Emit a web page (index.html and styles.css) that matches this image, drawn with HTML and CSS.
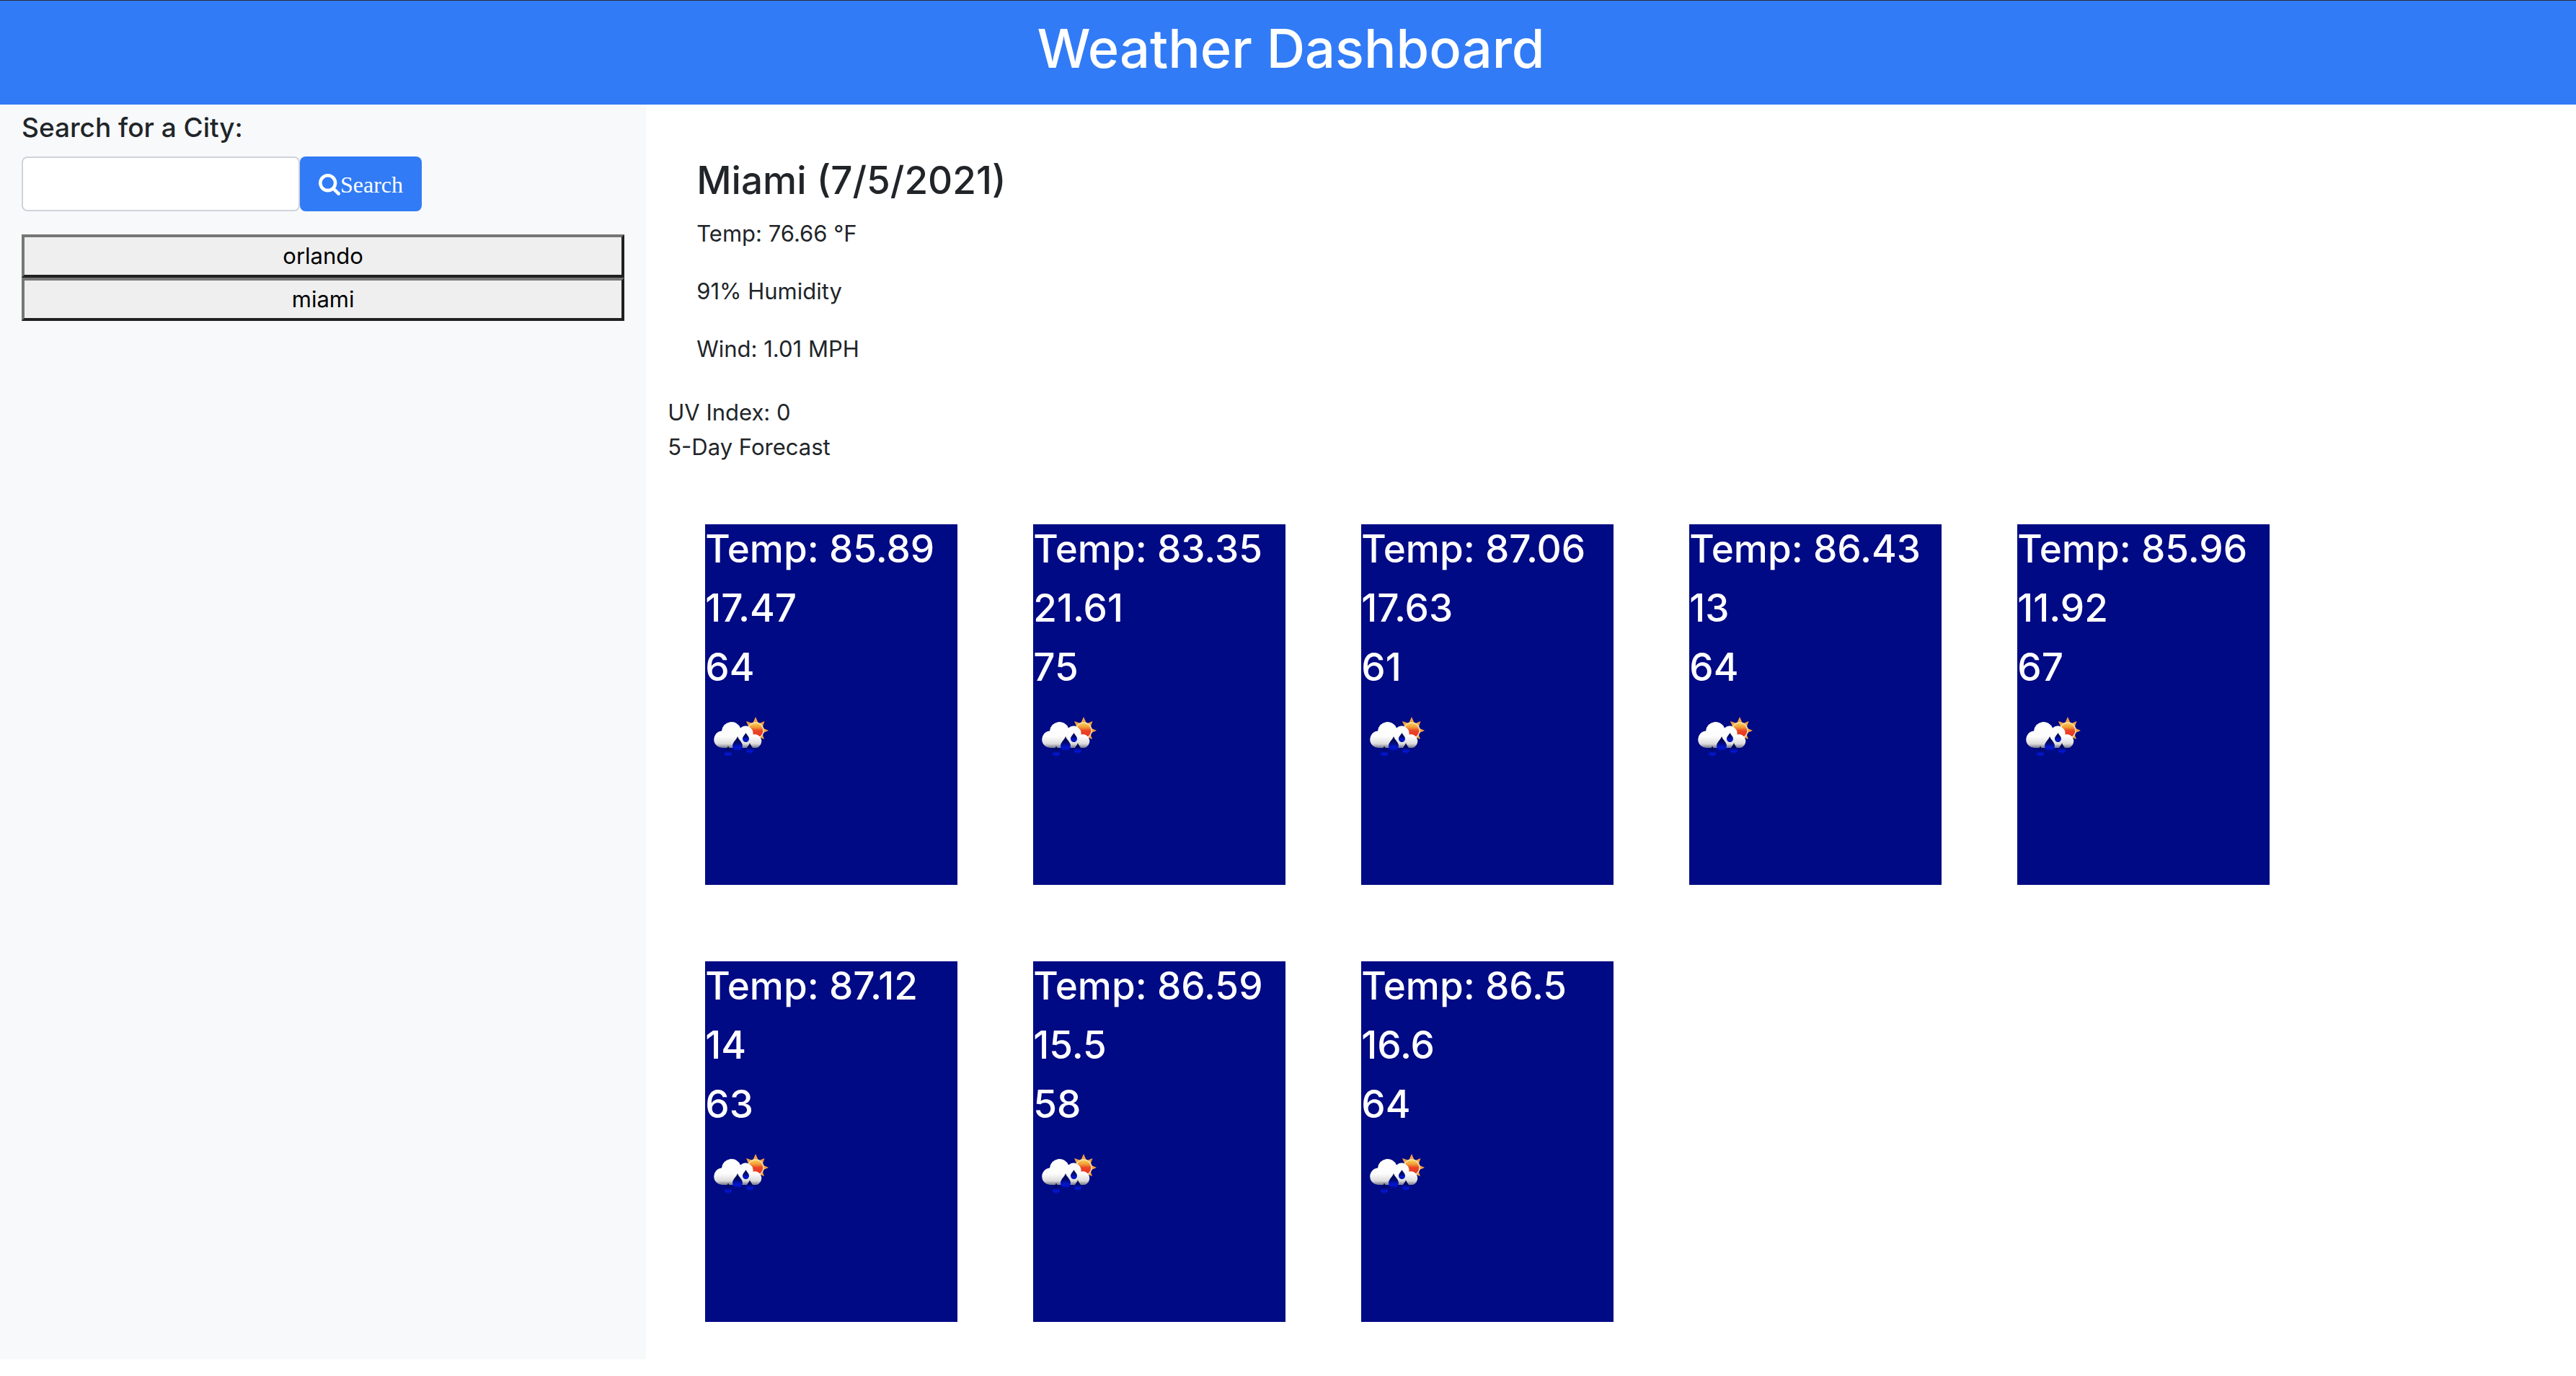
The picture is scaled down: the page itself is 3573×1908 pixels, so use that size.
FILE: index.html
```html
<!DOCTYPE html>
<html lang="en">
<head>
  <meta charset="utf-8">
  <meta name="viewport" content="width=device-width, initial-scale=1">
  <title>Weather Dashboard</title>
  <link rel="stylesheet" href="styles.css">
</head>
<body>
  <svg class="sprite" aria-hidden="true">
    <defs>
      <linearGradient id="cloud-fill" gradientUnits="userSpaceOnUse" x1="0" y1="26" x2="0" y2="64">
        <stop offset="0" stop-color="#fff"/>
        <stop offset=".6" stop-color="#fcfcfc"/>
        <stop offset=".85" stop-color="#dcdcdc"/>
        <stop offset="1" stop-color="#77788c"/>
      </linearGradient>
      <linearGradient id="sun-fill" x1="0" y1="0" x2="0" y2="1">
        <stop offset="0" stop-color="#f9d65c"/>
        <stop offset=".3" stop-color="#f29a35"/>
        <stop offset=".5" stop-color="#ea4526"/>
        <stop offset="1" stop-color="#e8321f"/>
      </linearGradient>
      <linearGradient id="drop-fill" x1="0" y1="0" x2="0" y2="1">
        <stop offset="0" stop-color="#000748"/>
        <stop offset=".45" stop-color="#000a70"/>
        <stop offset=".75" stop-color="#0316d6"/>
        <stop offset="1" stop-color="#010c90"/>
      </linearGradient>
    </defs>
    <symbol id="icon-rain" viewBox="-1 1 100 100">
      <path fill="#f0a040" d="M69 21l3.500 8h-7zM81.500 27l-3 8.500-5.500-5zM87 40l-8 3.500v-7zM81 52l-8-3 5-5.500zM56 27l9 3-5.500 5.500z"/>
      <circle cx="69" cy="40" r="11" fill="url(#sun-fill)" stroke="#fbe3b0" stroke-width="1.500"/>
      <path fill="url(#cloud-fill)" d="M24 64a11.500 11.500 0 0 1-2-23.500A13.500 13.500 0 0 1 48 36.500a10.500 10.500 0 0 1 17.500 9A9.500 9.500 0 1 1 70 64z"/>
      <path fill="url(#drop-fill)" d="M44 48c1.500 5 7 8 7 13.500a7 7 0 0 1-14 0c0-5.500 5.500-8.500 7-13.500z"/>
      <path fill="url(#drop-fill)" d="M55.500 43c1 3 4.500 5 4.500 8.500a4.500 4.500 0 0 1-9 0c0-3.500 3.500-5.500 4.500-8.500z"/>
      <path fill="url(#drop-fill)" d="M61 57c1 4 5 6 5 10.500a5 5 0 0 1-10 0c0-4.500 4-6.500 5-10.500z"/>
      <path fill="url(#drop-fill)" d="M31 61c1 4 5 6 5 10.500a5 5 0 0 1-10 0c0-4.500 4-6.500 5-10.500z"/>
    </symbol>
  </svg>

  <header class="header">
    <h1 class="title">Weather Dashboard</h1>
  </header>

  <div class="layout">
    <aside class="sidebar">
      <form class="search">
        <label class="search-label" for="city">Search for a City:</label>
        <div class="search-row">
          <input class="search-input" id="city" type="text">
          <button class="search-button" type="button">
            <svg class="search-icon" viewBox="0 128 1664 1664" aria-hidden="true"><path fill="currentColor" d="M1152 832q0-185-131.500-316.500T704 384 387.500 515.500 256 832t131.500 316.500T704 1280t316.500-131.500T1152 832zm512 832q0 52-38 90t-90 38q-54 0-90-38l-343-342q-179 124-399 124-143 0-273.500-55.500t-225-150-150-225T0 832t55.500-273.500 150-225 225-150T704 128t273.500 55.500 225 150 150 225T1408 832q0 220-124 399l343 343q37 37 37 90z"/></svg>Search
          </button>
        </div>
      </form>
      <div class="history">
        <button class="history-button" type="button">orlando</button>
        <button class="history-button" type="button">miami</button>
      </div>
    </aside>

    <main class="main">
      <section class="current">
        <h3 class="city">Miami (7/5/2021)</h3>
        <p class="reading">Temp: 76.66 °F</p>
        <p class="reading">91% Humidity</p>
        <p class="reading">Wind: 1.01 MPH</p>
      </section>
      <div class="line">UV Index: 0</div>
      <div class="line">5-Day Forecast</div>
      <section class="forecast">
        <article class="card"><h3 class="value">Temp: 85.89</h3><h3 class="value">17.47</h3><h3 class="value">64</h3><svg class="weather"><use href="#icon-rain"/></svg></article>
        <article class="card"><h3 class="value">Temp: 83.35</h3><h3 class="value">21.61</h3><h3 class="value">75</h3><svg class="weather"><use href="#icon-rain"/></svg></article>
        <article class="card"><h3 class="value">Temp: 87.06</h3><h3 class="value">17.63</h3><h3 class="value">61</h3><svg class="weather"><use href="#icon-rain"/></svg></article>
        <article class="card"><h3 class="value">Temp: 86.43</h3><h3 class="value">13</h3><h3 class="value">64</h3><svg class="weather"><use href="#icon-rain"/></svg></article>
        <article class="card"><h3 class="value">Temp: 85.96</h3><h3 class="value">11.92</h3><h3 class="value">67</h3><svg class="weather"><use href="#icon-rain"/></svg></article>
        <article class="card"><h3 class="value">Temp: 87.12</h3><h3 class="value">14</h3><h3 class="value">63</h3><svg class="weather"><use href="#icon-rain"/></svg></article>
        <article class="card"><h3 class="value">Temp: 86.59</h3><h3 class="value">15.5</h3><h3 class="value">58</h3><svg class="weather"><use href="#icon-rain"/></svg></article>
        <article class="card"><h3 class="value">Temp: 86.5</h3><h3 class="value">16.6</h3><h3 class="value">64</h3><svg class="weather"><use href="#icon-rain"/></svg></article>
      </section>
    </main>
  </div>
</body>
</html>
```
FILE: styles.css
```css
* {
  box-sizing: border-box;
}

body {
  margin: 0;
  background: #fff;
  color: #212529;
  font-family: Inter, "Liberation Sans", sans-serif;
  font-size: 31px;
  line-height: 48px;
}

h1,
h3,
p {
  margin: 0;
}

.sprite {
  display: block;
  width: 0;
  height: 0;
}

.header {
  padding: 18px 0 30px 8px;
  border-top: 1px solid #2b2d33;
  background: #317bf6;
  color: #fff;
  text-align: center;
}

.title {
  font-size: 74px;
  font-weight: 500;
  line-height: 96px;
}

.layout {
  display: flex;
}

.sidebar {
  flex: none;
  width: calc(25% + 3px);
  padding: 8px 30px;
  background: #f8f9fb;
}

.search-label {
  display: block;
  margin-bottom: 16px;
  font-size: 37px;
  font-weight: 500;
  line-height: 48px;
}

.search-row {
  display: flex;
  margin-bottom: 32px;
}

.search-input {
  width: 386px;
  height: 76px;
  padding: 12px 24px;
  border: 2px solid #ced4da;
  border-radius: 8px;
  background: #fff;
  font: inherit;
}

.search-button {
  display: flex;
  align-items: center;
  height: 76px;
  padding: 2px 26px 0;
  border: 0;
  border-radius: 8px;
  background: #317bf6;
  color: #fff;
  font-family: "Liberation Serif", serif;
  font-size: 32px;
}

.search-icon {
  width: 30px;
  height: 30px;
}

.history {
  display: flex;
  flex-direction: column;
}

.history-button {
  height: 60px;
  padding: 0;
  border: 4px solid;
  border-color: #767676 #212121 #212121 #767676;
  background: #efefef;
  color: #000;
  font: inherit;
}

.main {
  flex: 1;
  min-width: 0;
  padding: 72px 30px 0;
}

.current {
  padding: 0 40px 8px;
}

.city {
  margin-bottom: 16px;
  font-size: 53px;
  font-weight: 500;
  line-height: 67px;
}

.reading {
  margin-bottom: 32px;
}

.forecast {
  display: flex;
  flex-wrap: wrap;
  gap: 106px 105px;
  padding: 83px 52px 52px;
}

.card {
  width: 350px;
  height: 500px;
  padding-top: 1px;
  background: #000a84;
  color: #fff;
}

.value {
  margin-bottom: 16px;
  font-size: 53px;
  font-weight: 500;
  line-height: 66px;
}

.weather {
  display: block;
  width: 100px;
  height: 100px;
}
```
